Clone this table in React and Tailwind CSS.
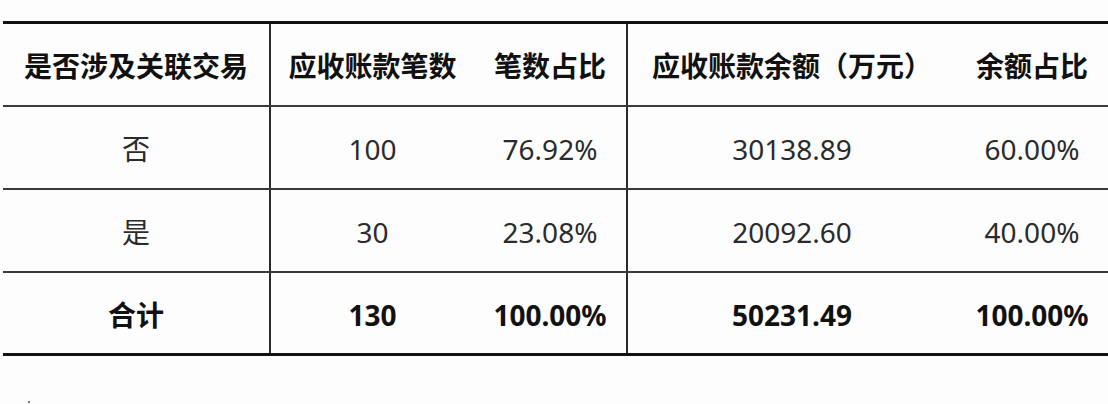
const rows = [
  { label: '否', count: '100', countPct: '76.92%', amount: '30138.89', amountPct: '60.00%' },
  { label: '是', count: '30', countPct: '23.08%', amount: '20092.60', amountPct: '40.00%' },
]

const font = { fontFamily: '"Noto Sans", "Noto Sans CJK SC", sans-serif' }

function Row({ cells, bold, last }) {
  const weight = bold ? 'font-bold text-[#111]' : 'font-normal text-[#2b2b2b]'
  return (
    <div className={`flex h-[83px] pt-[3px] ${last ? 'border-b-[3px] border-[#111]' : 'border-b-2 border-[#3a3a3a]'}`}>
      <div className={`w-[268px] -mt-[3px] pt-[3px] border-r-2 border-[#2a2a2a] flex items-center justify-center ${weight}`}>{cells[0]}</div>
      <div className={`w-[203px] flex items-center justify-center ${weight}`}>{cells[1]}</div>
      <div className={`w-[154px] -mt-[3px] pt-[3px] border-r-2 border-[#2a2a2a] flex items-center justify-center ${weight}`}>{cells[2]}</div>
      <div className={`w-[328px] flex items-center justify-center ${weight}`}>{cells[3]}</div>
      <div className={`flex-1 flex items-center justify-center ${weight}`}>{cells[4]}</div>
    </div>
  )
}

export default function App() {
  return (
    <div className="w-[1108px] h-[404px] bg-[#fdfdfd] pt-[21px] pl-[3px] text-[28px] leading-none overflow-hidden" style={font}>
      <div className="border-t-[3px] border-[#111]">
        {/* Header */}
        <Row bold cells={['是否涉及关联交易', '应收账款笔数', '笔数占比', '应收账款余额（万元）', '余额占比']} />
        {rows.map(r => (
          <Row key={r.label} cells={[r.label, r.count, r.countPct, r.amount, r.amountPct]} />
        ))}
        <Row bold last cells={['合计', '130', '100.00%', '50231.49', '100.00%']} />
      </div>
      <div className="ml-[25px] mt-[45px] w-[2px] h-[2px] bg-[#777]" />
    </div>
  )
}
